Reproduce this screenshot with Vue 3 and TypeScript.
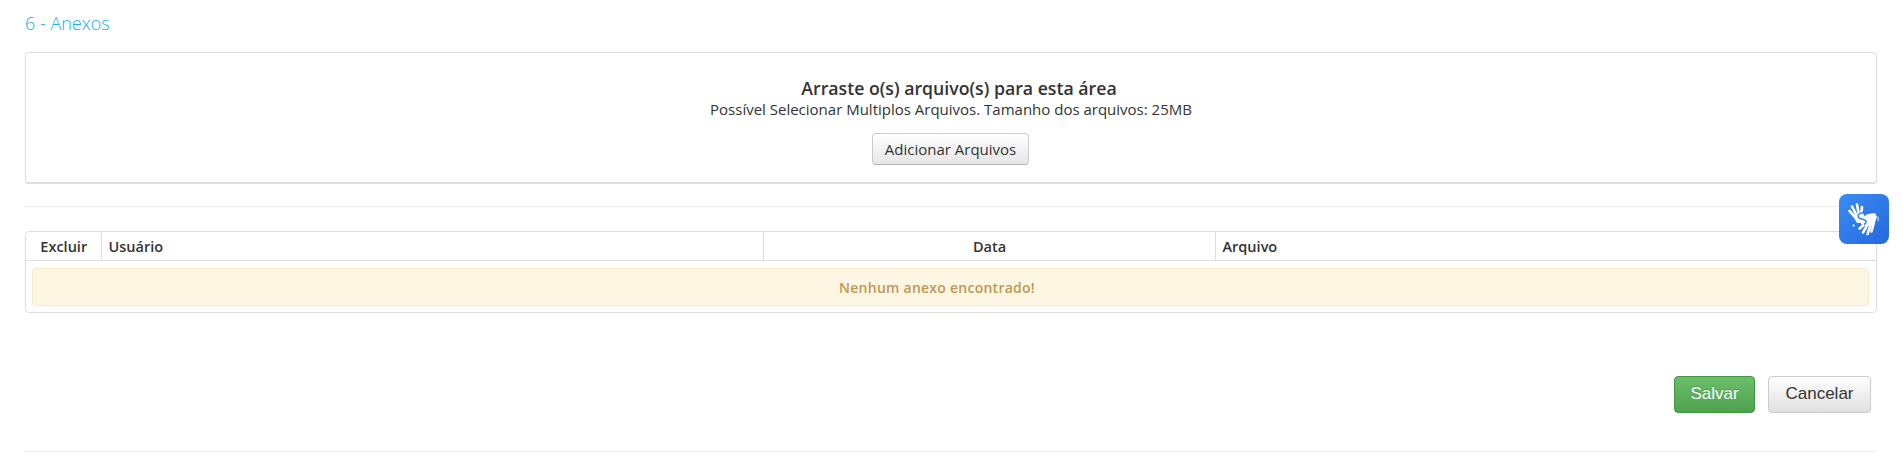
<script setup lang="ts">
const columns = [
  { label: "Excluir", cls: "col-del" },
  { label: "Usuário", cls: "col-user" },
  { label: "Data", cls: "col-date" },
  { label: "Arquivo", cls: "col-file" },
]
</script>

<template>
  <div class="page">
    <h4 class="title">6 - Anexos</h4>

    <div class="dropzone">
      <strong class="drop-title">Arraste o(s) arquivo(s) para esta área</strong>
      <span class="drop-hint">Possível Selecionar Multiplos Arquivos. Tamanho dos arquivos: 25MB</span>
      <button class="btn btn-add" type="button">Adicionar Arquivos</button>
    </div>

    <hr class="rule rule-top" />

    <div class="table-wrap">
      <table class="files">
        <thead>
          <tr>
            <th v-for="col in columns" :key="col.label" :class="col.cls">{{ col.label }}</th>
          </tr>
        </thead>
        <tbody>
          <tr>
            <td colspan="4" class="empty-cell">
              <div class="alert">Nenhum anexo encontrado!</div>
            </td>
          </tr>
        </tbody>
      </table>
    </div>

    <div class="actions">
      <button class="btn btn-save" type="button">Salvar</button>
      <button class="btn btn-cancel" type="button">Cancelar</button>
    </div>

    <hr class="rule rule-bottom" />

    <div class="vlibras" aria-label="VLibras">
      <svg viewBox="0 0 50 50" width="50" height="50">
        <!-- left hand -->
        <g stroke="#fff" stroke-linecap="round" fill="none" stroke-width="2.6">
          <path d="M10.5 17 L16 23" />
          <path d="M13 12.5 L18 22" />
          <path d="M18 10.5 L20 21" />
          <path d="M23 13 L22 22" />
        </g>
        <path d="M14 22 L24 19 L26 24 L22 29 L18 29 Z" fill="#fff" />
        <!-- right hand -->
        <path d="M22 24 L29 20 L36 19 L38 23 L36 28 L31 31 L26 32 L22 30 Z" fill="#fff" />
        <g stroke="#fff" stroke-linecap="round" fill="none" stroke-width="2.6">
          <path d="M27 29 L20.5 34.5" />
          <path d="M29 30 L24 38.5" />
          <path d="M32 30 L28.5 40" />
          <path d="M35 28 L32.5 37.5" />
        </g>
        <!-- thumb gap -->
        <path d="M25 18.5 C20 19 18 21 19.5 23.5 C21 25.5 25 24.5 27 27 C27.5 28 26.5 30 25 30.5" stroke="#2f7bea" stroke-width="1.4" fill="none" />
        <!-- motion marks -->
        <g fill="#cfe2fb">
          <path d="M38.6 22.6 h1 v4.6 h-1 z" />
          <path d="M13 31.4 l1.6 -1.4 l1.6 1.6 l-1.6 1.4 z" />
        </g>
      </svg>
    </div>
  </div>
</template>

<style>
html,
body {
  margin: 0;
  background: #fff;
}
</style>

<style scoped>
.page {
  position: relative;
  box-sizing: border-box;
  width: 1903px;
  height: 458px;
  padding: 12px 26px 0 25px;
  overflow: hidden;
  font-family: "Open Sans", sans-serif;
  font-size: 15px;
  color: #333;
}
.title {
  margin: 0;
  font-size: 18px;
  font-weight: 300;
  line-height: 22px;
  color: #22aef2;
}
.dropzone {
  display: flex;
  flex-direction: column;
  align-items: center;
  box-sizing: border-box;
  height: 132px;
  margin-top: 18px;
  padding-top: 24px;
  border: 1px solid #ddd;
  border-bottom-width: 2px;
  border-radius: 4px;
}
.drop-title {
  padding-left: 16px;
  font-size: 17.7px;
  font-weight: 600;
  line-height: 23px;
}
.drop-hint {
  font-size: 15px;
  line-height: 19px;
}
.btn {
  box-sizing: border-box;
  border-radius: 4px;
  cursor: pointer;
}
.btn-add {
  width: 157px;
  height: 32px;
  margin: 14px 1px 0 0;
  padding: 0;
  border: 1px solid #ccc;
  border-bottom-color: #b5b5b5;
  background: linear-gradient(#fff, #e6e6e6);
  font-family: "Open Sans", sans-serif;
  font-size: 15px;
  color: #333;
}
.rule {
  height: 0;
  margin: 0;
  border: 0;
  border-top: 1px solid #eee;
}
.rule-top {
  margin-top: 22px;
}
.table-wrap {
  margin-top: 24px;
  border: 1px solid #ddd;
  border-radius: 4px;
}
.files {
  width: 100%;
  border-collapse: collapse;
  table-layout: fixed;
}
.files th {
  box-sizing: border-box;
  height: 28px;
  padding: 1px 6px 0 7px;
  border-bottom: 1px solid #ddd;
  border-left: 1px solid #ddd;
  font-size: 14.5px;
  font-weight: 600;
  text-align: left;
}
.files th:first-child {
  border-left: 0;
}
.files .col-del {
  width: 75px;
  text-align: center;
}
.files .col-user {
  width: 662px;
}
.files .col-date {
  width: 452px;
  text-align: center;
}
.empty-cell {
  padding: 7px 7px 6px 6px;
}
.alert {
  box-sizing: border-box;
  height: 38px;
  padding-right: 27px;
  border: 1px solid #faebcc;
  border-radius: 4px;
  background: #fdf6e3;
  font-size: 14px;
  font-weight: 600;
  letter-spacing: 0.25px;
  line-height: 38px;
  text-align: center;
  color: #c09853;
}
.actions {
  display: flex;
  justify-content: flex-end;
  gap: 13px;
  margin-top: 63px;
  padding-right: 6px;
}
.btn-save,
.btn-cancel {
  height: 37px;
  font-family: "Liberation Sans", Arial, sans-serif;
  font-size: 17px;
}
.btn-save {
  width: 81px;
  border: 1px solid #419641;
  background: linear-gradient(#6bbf6b, #4ea24e);
  color: #fff;
  text-shadow: 0 -1px 0 rgba(0, 0, 0, 0.2);
}
.btn-cancel {
  width: 103px;
  border: 1px solid #ccc;
  background: linear-gradient(#fff, #e0e0e0);
  color: #333;
}
.rule-bottom {
  margin-top: 38px;
}
.vlibras {
  position: absolute;
  left: 1839px;
  top: 194px;
  width: 50px;
  height: 50px;
  border-radius: 8px;
  background: linear-gradient(135deg, #3a8df5, #2468dc);
}
</style>
